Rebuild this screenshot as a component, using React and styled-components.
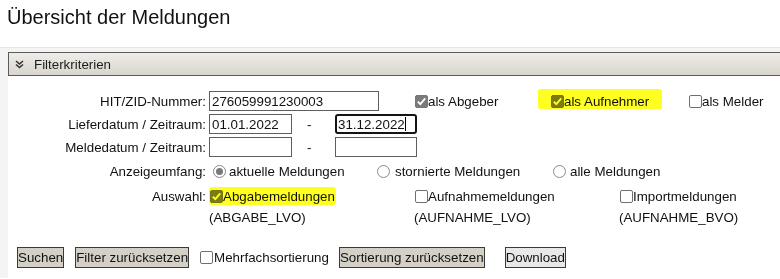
import styled, { createGlobalStyle } from 'styled-components';

const GlobalStyle = createGlobalStyle`
	html, body {
		margin: 0;
		padding: 0;
		background: #fff;
	}
	body {
		font-family: 'Liberation Sans', Arial, sans-serif;
		font-size: 13.33px;
		color: #111;
	}
`;

const Title = styled.h1`
	margin: 0;
	height: 47px;
	box-sizing: border-box;
	padding: 6px 0 0 7px;
	font-size: 20px;
	line-height: 23px;
	font-weight: normal;
	color: #111;
`;

const Section = styled.section`
	background: #f4f4f4;
	border-top: 1px solid #e6e6e6;
	padding: 4px 0 0 8px;
`;

const Panel = styled.div`
	background: #fff;
	padding-bottom: 10px;
`;

const PanelHeader = styled.div`
	display: flex;
	align-items: center;
	gap: 10px;
	height: 24px;
	box-sizing: border-box;
	padding-left: 6px;
	border: 1px solid #5b5b5b;
	border-right: none;
	background: linear-gradient(#efede8, #d9d5ce);
	color: #1c1c1c;
`;

const FormBody = styled.div`
	padding-top: 15px;
	display: flex;
	flex-direction: column;
`;

const Row = styled.div`
	display: flex;
	align-items: center;
	height: 20px;
	margin-top: ${p => p.$top || 0}px;
`;

const Label = styled.div`
	width: 201px;
	flex-shrink: 0;
	box-sizing: border-box;
	padding-right: 3px;
	text-align: right;
	white-space: nowrap;
`;

const Field = styled.div`
	display: flex;
	align-items: center;
	width: ${p => p.$w}px;
	height: 20px;
	box-sizing: border-box;
	padding-left: ${p => (p.$focused ? 1 : 2)}px;
	border: ${p => (p.$focused ? '2px solid #141414' : '1px solid #5e5e5e')};
	border-radius: ${p => (p.$focused ? 3 : 0)}px;
	background: #fff;
	white-space: nowrap;
`;

const Caret = styled.span`
	display: inline-block;
	width: 1px;
	height: 14px;
	background: #000;
`;

const DashCell = styled.div`
	width: 43px;
	box-sizing: border-box;
	padding-left: 15px;
`;

const Cell = styled.div`
	display: flex;
	align-items: center;
	width: ${p => (p.$w ? `${p.$w}px` : 'auto')};
	margin-left: ${p => p.$ml || 0}px;
	flex-shrink: 0;
	white-space: nowrap;
`;

const Option = styled.label`
	display: inline-flex;
	align-items: center;
	gap: ${p => p.$gap || 0}px;
	margin-left: ${p => p.$ml || 0}px;
	margin-right: ${p => p.$mr || 0}px;
	white-space: nowrap;
`;

const Box = styled.span`
	display: inline-flex;
	align-items: center;
	justify-content: center;
	width: 13px;
	height: 13px;
	box-sizing: border-box;
	border-radius: 2px;
	border: 1px solid ${p => (p.$checked ? '#777' : '#6f6f6f')};
	background: ${p => (p.$checked ? '#7b7b7b' : '#fff')};
	flex-shrink: 0;
`;

const Radio = styled.span`
	display: inline-flex;
	align-items: center;
	justify-content: center;
	width: 13px;
	height: 13px;
	box-sizing: border-box;
	border-radius: 50%;
	border: 1px solid #8a8a8a;
	background: #fff;
	flex-shrink: 0;

	&::after {
		content: '';
		display: ${p => (p.$checked ? 'block' : 'none')};
		width: 7px;
		height: 7px;
		border-radius: 50%;
		background: #7a7a7a;
	}
`;

const Highlight = styled.span`
	position: relative;
	display: inline-flex;
	align-items: center;

	&::after {
		content: '';
		position: absolute;
		top: ${p => p.$t}px;
		bottom: ${p => p.$b}px;
		left: ${p => p.$l}px;
		right: ${p => p.$r}px;
		border-radius: 3px;
		background: #ffff22;
		mix-blend-mode: multiply;
		pointer-events: none;
	}
`;

const ButtonBar = styled.div`
	display: flex;
	align-items: center;
	margin-top: 20px;
	padding-left: 9px;
	height: 21px;
`;

const Button = styled.button`
	height: 21px;
	padding: 0;
	margin-right: ${p => p.$mr || 0}px;
	border: 1px solid #3a3a3a;
	background: ${p => (p.$light ? '#e8e8e8' : '#d4d0c8')};
	font-family: inherit;
	font-size: 13.33px;
	color: #111;
	line-height: 19px;
	white-space: nowrap;
`;

const Check = ({ checked }) => (
	<Box $checked={checked}>
		{checked && (
			<svg width="11" height="11" viewBox="0 0 11 11">
				<path d="M1.8 5.6 L4.3 8.2 L9.2 2.4" fill="none" stroke="#fff" strokeWidth="1.8" />
			</svg>
		)}
	</Box>
);

const Chevrons = () => (
	<svg width="9" height="9" viewBox="0 0 9 9">
		<path d="M1 1 L4.5 4 L8 1 M1 4.5 L4.5 7.5 L8 4.5" fill="none" stroke="#333" strokeWidth="1.6" />
	</svg>
);

const App = () => {
	return (
		<>
			<GlobalStyle />
			<Title>Übersicht der Meldungen</Title>
			<Section>
				<Panel>
					<PanelHeader>
						<Chevrons />
						<span>Filterkriterien</span>
					</PanelHeader>

					<FormBody>
						<Row>
							<Label>HIT/ZID-Nummer:</Label>
							<Field $w={170}>276059991230003</Field>
							<Cell $w={136} $ml={36}>
								<Option>
									<Check checked />
									als Abgeber
								</Option>
							</Cell>
							<Cell $w={138}>
								<Highlight $t={-5} $b={0} $l={-13} $r={-13}>
									<Option>
										<Check checked />
										als Aufnehmer
									</Option>
								</Highlight>
							</Cell>
							<Cell>
								<Option>
									<Check />
									als Melder
								</Option>
							</Cell>
						</Row>

						<Row $top={3}>
							<Label>Lieferdatum / Zeitraum:</Label>
							<Field $w={83}>01.01.2022</Field>
							<DashCell>-</DashCell>
							<Field $w={82} $focused>
								31.12.2022
								<Caret />
							</Field>
						</Row>

						<Row $top={3}>
							<Label>Meldedatum / Zeitraum:</Label>
							<Field $w={83} />
							<DashCell>-</DashCell>
							<Field $w={82} />
						</Row>

						<Row $top={4}>
							<Label>Anzeigeumfang:</Label>
							<Cell $w={164}>
								<Option $gap={3} $ml={4}>
									<Radio $checked />
									aktuelle Meldungen
								</Option>
							</Cell>
							<Cell $w={176}>
								<Option $gap={5} $ml={4}>
									<Radio />
									stornierte Meldungen
								</Option>
							</Cell>
							<Cell>
								<Option $gap={4} $ml={4}>
									<Radio />
									alle Meldungen
								</Option>
							</Cell>
						</Row>

						<Row $top={5}>
							<Label>Auswahl:</Label>
							<Cell $w={205}>
								<Highlight $t={-2} $b={-1} $l={0} $r={-1}>
									<Option $ml={1}>
										<Check checked />
										Abgabemeldungen
									</Option>
								</Highlight>
							</Cell>
							<Cell $w={205}>
								<Option $ml={1}>
									<Check />
									Aufnahmemeldungen
								</Option>
							</Cell>
							<Cell>
								<Option $ml={1}>
									<Check />
									Importmeldungen
								</Option>
							</Cell>
						</Row>

						<Row $top={1}>
							<Label />
							<Cell $w={205}>(ABGABE_LVO)</Cell>
							<Cell $w={205}>(AUFNAHME_LVO)</Cell>
							<Cell>(AUFNAHME_BVO)</Cell>
						</Row>
					</FormBody>

					<ButtonBar>
						<Button $mr={11}>Suchen</Button>
						<Button $mr={11}>Filter zurücksetzen</Button>
						<Option $gap={1} $mr={10}>
							<Check />
							Mehrfachsortierung
						</Option>
						<Button $mr={20}>Sortierung zurücksetzen</Button>
						<Button $light>Download</Button>
					</ButtonBar>
				</Panel>
			</Section>
		</>
	);
};

export default App;
